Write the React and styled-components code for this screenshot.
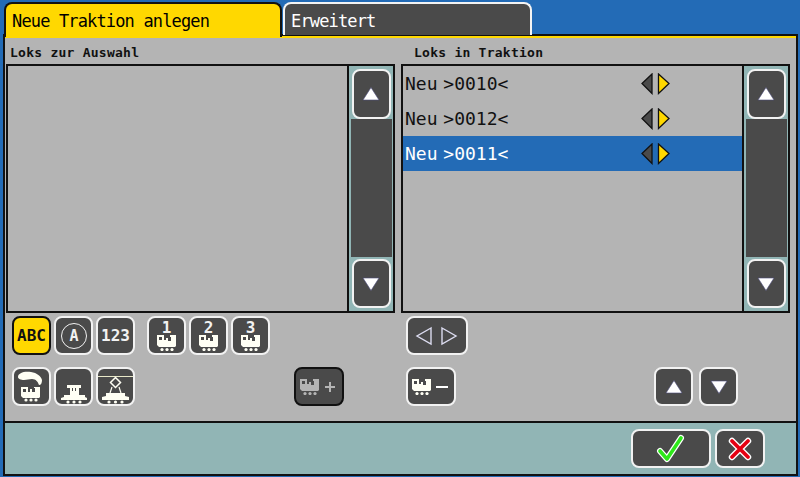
import React from "react";
import styled, { createGlobalStyle } from "styled-components";

const Global = createGlobalStyle`
  html, body { margin: 0; padding: 0; background: #236bb6; }
  * { box-sizing: border-box; }
`;
const mono = `"DejaVu Sans Mono", monospace`;
const dark = "#4a4a4a";
const cream = "#fffff4";

const Page = styled.div`
  width: 800px; height: 477px; background: #236bb6; overflow: hidden;
  display: flex; flex-direction: column; padding: 2px 2px 1px 3px; font-family: ${mono};
`;
const TabBar = styled.div`
  display: flex; height: 33px; padding-left: 1px; gap: 1px; margin-bottom: -1px; position: relative; z-index: 1;
`;
const Tab = styled.div`
  height: ${p => (p.$active ? "35px" : "33px")};
  width: ${p => (p.$active ? "278px" : "249px")};
  background: ${p => (p.$active ? "#ffd800" : dark)};
  color: ${p => (p.$active ? "#000" : "#fff")};
  border: 2px solid ${p => (p.$active ? "#111" : "#f4f4f4")};
  border-bottom: none; border-radius: 8px 8px 0 0;
  font-size: 17px; letter-spacing: -0.85px; line-height: 34px; padding-left: 6px;
`;
const Panel = styled.div`
  flex: 1; display: flex; flex-direction: column; border: 2px solid #111; background: #b4b4b4;
  &::before { content: ""; display: block; height: 2px; background: #ffd800; flex: none; }
`;
const Body = styled.div`
  flex: 1; display: grid; grid-template-columns: 389px 389px; column-gap: 6px; padding: 0 0 0 1px;
`;
const Column = styled.div`display: flex; flex-direction: column;`;
const Caption = styled.div`
  height: 26px; font-size: 13px; font-weight: bold; letter-spacing: 0.25px; line-height: 30px; color: #111;
  padding-left: ${p => p.$inset}px;
`;
const ListBox = styled.div`
  height: 249px; border: 2px solid #111; display: flex;
`;
const Rows = styled.div`flex: 1;`;
const Row = styled.div`
  height: 35px; display: flex; align-items: center; padding-left: 2px; font-size: 18px;
  background: ${p => (p.$sel ? "#236bb6" : "transparent")};
  color: ${p => (p.$sel ? "#fff" : "#111")};
`;
const RowName = styled.span`width: 236px; word-spacing: -5px; white-space: pre;`;
const Scroll = styled.div`
  width: 46px; border-left: 2px solid #111; background: #91b5b5;
  display: flex; flex-direction: column; align-items: center; padding: 3px 0;
`;
const Track = styled.div`width: 41px; flex: 1; background: ${dark}; margin: 0 0 2px;`;
const Btn = styled.div`
  width: ${p => p.$w || 39}px; height: ${p => p.$h || 39}px; flex: none;
  margin-left: ${p => p.$ml || 0}px;
  background: ${p => (p.$yellow ? "#ffd800" : dark)};
  border: 2px solid ${p => (p.$black || p.$yellow ? "#111" : "#f2f2f2")};
  border-radius: 8px; display: flex; align-items: center; justify-content: center;
  color: ${p => (p.$yellow ? "#111" : "#f2f2f2")}; font-family: ${mono};
  font-weight: bold; font-size: 16px;
`;
const Toolbar = styled.div`
  display: flex; height: 39px; margin-top: ${p => p.$mt}px; padding-left: ${p => p.$pl}px; gap: 3px;
`;
const NumStack = styled.span`
  display: flex; flex-direction: column; align-items: center; line-height: 15px; font-size: 16px; margin-top: -1px;
`;
const Footer = styled.div`
  height: 53px; border-top: 2px solid #111; background: #91b5b5; display: flex; align-items: flex-start;
  padding: 6px 0 0 626px; gap: 4px;
`;
const Spacer = styled.div`width: ${p => p.$w}px; flex: none;`;

const Tri = ({ dir = "up" }) => (
  <svg width="18" height="16" viewBox="0 0 18 16">
    <polygon points={dir === "up" ? "9,1.5 17,14 1,14" : "1,2 17,2 9,14.5"} fill="#fff" stroke="#4a4a7a" strokeWidth="0.6" />
  </svg>
);
const Pair = () => (
  <svg width="29" height="22" viewBox="0 0 29 22">
    <polygon points="11,1 1,10.5 11,20.5" fill="#4a4a4a" stroke="#111" strokeWidth="1.3" />
    <polygon points="17.5,1 28,10.5 17.5,20.5" fill="#ffd800" stroke="#111" strokeWidth="1.3" />
  </svg>
);
const Hollow = () => (
  <svg width="44" height="22" viewBox="0 0 44 22" fill="none" stroke="#dcdcf0" strokeWidth="1.4">
    <polygon points="16,3 2,11 16,19" />
    <polygon points="27,3 41,11 27,19" />
  </svg>
);
const Loco = ({ color = cream, w = 20 }) => (
  <svg width={w} height={(w * 16) / 20} viewBox="0 0 20 16" fill={color} style={{ display: "block" }}>
    <path d="M0 0h7v5h2V3h2v3h3V2h-1V0h6v11l-1 1H2l-2-2zM2 2v3h3V2z" fillRule="evenodd" />
    <circle cx="5" cy="14.5" r="1.6" /><circle cx="10" cy="14.5" r="1.6" /><circle cx="15" cy="14.5" r="1.6" />
  </svg>
);
const Circled = () => (
  <svg width="28" height="28" viewBox="0 0 28 28">
    <circle cx="14" cy="14" r="12.5" fill="none" stroke="#f2f2f2" strokeWidth="1" />
    <text x="14" y="19" textAnchor="middle" fontFamily="DejaVu Sans Mono" fontWeight="bold" fontSize="15" fill="#f2f2f2">A</text>
  </svg>
);
const Steam = () => (
  <svg width="35" height="35" viewBox="0 0 35 35" fill={cream}>
    <path d="M4 8C4 4 10 2 17 3c6 1 10 4 11 8 0 3-1 5-3 5-1-3-3-6-7-6-3 0-5 1-8 1-3 0-6-1-6-3z" />
    <path d="M7 18h7v5h2v-3h2v3h3v-4h-1v-1h6v10l-1 1H9l-2-2zM9 20v3h3v-3z" fillRule="evenodd" />
    <circle cx="12" cy="31" r="1.6" /><circle cx="17" cy="31" r="1.6" /><circle cx="22" cy="31" r="1.6" />
  </svg>
);
const Diesel = () => (
  <svg width="35" height="35" viewBox="0 0 35 35" fill={cream}>
    <path d="M11 16h14v3h-2v7h-9v-7h-3zM16 19v3h1v-3zM19 19v3h1v-3z" fillRule="evenodd" />
    <path d="M8 26h21v2l2 1v2H5v-2l3-1z" />
    <circle cx="12" cy="33" r="1.6" /><circle cx="18" cy="33" r="1.6" /><circle cx="24" cy="33" r="1.6" />
  </svg>
);
const Electric = () => (
  <svg width="35" height="35" viewBox="0 0 35 35" fill="none">
    <path d="M0 7.5h35" stroke="#e8e8c8" strokeWidth="1" />
    <path d="M17.5 8.5l5 5-5 5-5-5z" stroke={cream} strokeWidth="1.5" />
    <path d="M14 18l-2 6M21 18l2 6" stroke={cream} strokeWidth="1.2" />
    <path d="M8 24h19v3l4 1v3H4v-3l4-1z" fill={cream} />
    <circle cx="11" cy="33" r="1.6" fill={cream} /><circle cx="17.5" cy="33" r="1.6" fill={cream} /><circle cx="24" cy="33" r="1.6" fill={cream} />
  </svg>
);
const Sign = ({ children, color }) => (
  <svg width="16" height="12" viewBox="0 0 16 12" stroke={color} strokeWidth="2" style={{ marginLeft: 2 }}>
    {children}
  </svg>
);
const Check = () => (
  <svg width="30" height="30" viewBox="0 0 30 30" fill="none">
    <path d="M4 17l7 8L25 4" stroke="#fff" strokeWidth="6" strokeLinecap="round" strokeLinejoin="round" />
    <path d="M4 17l7 8L25 4" stroke="#2ee81a" strokeWidth="3.6" strokeLinecap="round" strokeLinejoin="round" />
  </svg>
);
const Cross = () => (
  <svg width="26" height="26" viewBox="0 0 26 26" fill="none">
    <path d="M5 5l16 16M21 5L5 21" stroke="#fff" strokeWidth="6.4" strokeLinecap="round" />
    <path d="M5 5l16 16M21 5L5 21" stroke="#e60012" strokeWidth="3.8" strokeLinecap="round" />
  </svg>
);

const ScrollBar = () => (
  <Scroll>
    <Btn $h={50}><Tri dir="up" /></Btn>
    <Track />
    <Btn $h={49}><Tri dir="down" /></Btn>
  </Scroll>
);
const NumBtn = ({ n, ml }) => (
  <Btn $ml={ml}><NumStack>{n}<Loco /></NumStack></Btn>
);
const rows = [["Neu >0010<"], ["Neu >0012<"], ["Neu >0011<", true]];

export default function App() {
  return (
    <Page>
      <Global />
      <TabBar>
        <Tab $active>Neue Traktion anlegen</Tab>
        <Tab>Erweitert</Tab>
      </TabBar>
      <Panel>
        <Body>
          <Column>
            <Caption $inset={4}>Loks zur Auswahl</Caption>
            <ListBox><Rows /><ScrollBar /></ListBox>
            <Toolbar $mt={3} $pl={6}>
              <Btn $yellow>ABC</Btn>
              <Btn><Circled /></Btn>
              <Btn>123</Btn>
              <NumBtn n="1" ml={9} />
              <NumBtn n="2" />
              <NumBtn n="3" />
            </Toolbar>
            <Toolbar $mt={12} $pl={6}>
              <Btn><Steam /></Btn>
              <Btn><Diesel /></Btn>
              <Btn><Electric /></Btn>
              <Spacer $w={153} />
              <Btn $w={50} $black>
                <Loco color="#b4b4b4" />
                <Sign color="#b4b4b4"><path d="M3 6h10M8 1v10" /></Sign>
              </Btn>
            </Toolbar>
          </Column>
          <Column>
            <Caption $inset={13}>Loks in Traktion</Caption>
            <ListBox>
              <Rows>
                {rows.map(([t, s]) => (
                  <Row key={t} $sel={s}><RowName>{t}</RowName><Pair /></Row>
                ))}
              </Rows>
              <ScrollBar />
            </ListBox>
            <Toolbar $mt={3} $pl={5}>
              <Btn $w={62}><Hollow /></Btn>
            </Toolbar>
            <Toolbar $mt={12} $pl={5}>
              <Btn $w={50}>
                <Loco />
                <Sign color="#fff"><path d="M2 6h12" /></Sign>
              </Btn>
              <Spacer $w={192} />
              <Btn><Tri dir="up" /></Btn>
              <Btn $ml={3}><Tri dir="down" /></Btn>
            </Toolbar>
          </Column>
        </Body>
        <Footer>
          <Btn $w={80}><Check /></Btn>
          <Btn $w={50}><Cross /></Btn>
        </Footer>
      </Panel>
    </Page>
  );
}
